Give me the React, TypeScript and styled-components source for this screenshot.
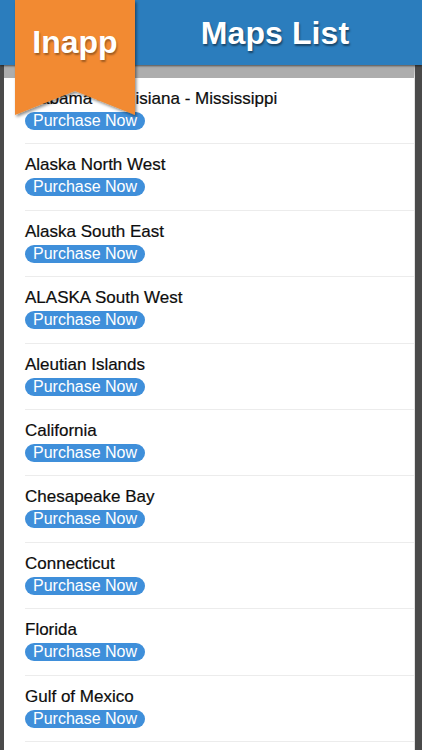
import React from "react";
import styled, { createGlobalStyle } from "styled-components";

const Global = createGlobalStyle`
  html, body {
    margin: 0;
    padding: 0;
    width: 422px;
    height: 750px;
    overflow: hidden;
    background: #4a4a4a;
    font-family: "Liberation Sans", Arial, sans-serif;
  }
`;

const Screen = styled.div`
  position: relative;
  width: 422px;
  height: 750px;
  display: flex;
  flex-direction: column;
  overflow: hidden;
  background: #4a4a4a;
`;

const Header = styled.header`
  flex: 0 0 65px;
  height: 65px;
  background: #2b7dbd;
  display: flex;
  align-items: center;
  justify-content: center;
  padding: 0 7px 0 135px;
  box-shadow: 0 1px 2px rgba(0, 0, 0, 0.55);
  position: relative;
  z-index: 1;
`;

const Title = styled.h1`
  margin: 0;
  color: #ffffff;
  font-size: 32px;
  line-height: 32px;
  font-weight: 700;
  text-shadow: 1px 2px 2px rgba(0, 0, 0, 0.45);
  letter-spacing: 0.1px;
`;

const Content = styled.main`
  flex: 1 1 auto;
  margin: 0 7px 0 4px;
  background: #ffffff;
  border-top: 13.5px solid #adadad;
  border-right: 1px solid #e2e2e2;
  overflow: hidden;
`;

const Row = styled.div`
  box-sizing: border-box;
  height: 66.4px;
  margin-left: 21px;
  padding-top: 11px;
  border-bottom: 1px solid #ececec;
  display: flex;
  flex-direction: column;
  align-items: flex-start;
`;

const RowTitle = styled.div`
  font-size: 17px;
  line-height: 20px;
  color: #0d0d0d;
  white-space: nowrap;
  -webkit-text-stroke: 0.2px #0d0d0d;
`;

const Pill = styled.span`
  margin-top: 3px;
  height: 18px;
  padding: 0 8px;
  border-radius: 9px;
  background: #3f8fda;
  color: #ffffff;
  font-size: 16px;
  line-height: 18px;
  white-space: nowrap;
`;

const Ribbon = styled.div`
  position: absolute;
  left: 15px;
  top: 0;
  width: 120px;
  height: 120px;
  z-index: 5;
`;

const RibbonShape = styled.svg`
  position: absolute;
  left: 0;
  top: 0;
  overflow: visible;
`;

const RibbonText = styled.div`
  position: relative;
  padding-top: 26px;
  text-align: center;
  color: #ffffff;
  font-size: 32px;
  line-height: 32px;
  font-weight: 700;
  text-shadow: 1px 2px 2px rgba(0, 0, 0, 0.35);
`;

const maps = [
  "Alabama - Louisiana - Mississippi",
  "Alaska North West",
  "Alaska South East",
  "ALASKA South West",
  "Aleutian Islands",
  "California",
  "Chesapeake Bay",
  "Connecticut",
  "Florida",
  "Gulf of Mexico",
];

export default function App() {
  return (
    <>
      <Global />
      <Screen>
        <Header>
          <Title>Maps List</Title>
        </Header>
        <Content>
          {maps.map((m) => (
            <Row key={m}>
              <RowTitle>{m}</RowTitle>
              <Pill>Purchase Now</Pill>
            </Row>
          ))}
        </Content>
        <Ribbon>
          <RibbonShape width="120" height="118" viewBox="0 0 120 118">
            <defs>
              <filter id="rs" x="-20%" y="-20%" width="140%" height="140%">
                <feDropShadow dx="1.5" dy="2" stdDeviation="1.8" floodColor="#000" floodOpacity="0.45" />
              </filter>
            </defs>
            <path d="M0 0 H120 V115 L60 91 L0 115 Z" fill="#f28a30" filter="url(#rs)" />
          </RibbonShape>
          <RibbonText>Inapp</RibbonText>
        </Ribbon>
      </Screen>
    </>
  );
}
